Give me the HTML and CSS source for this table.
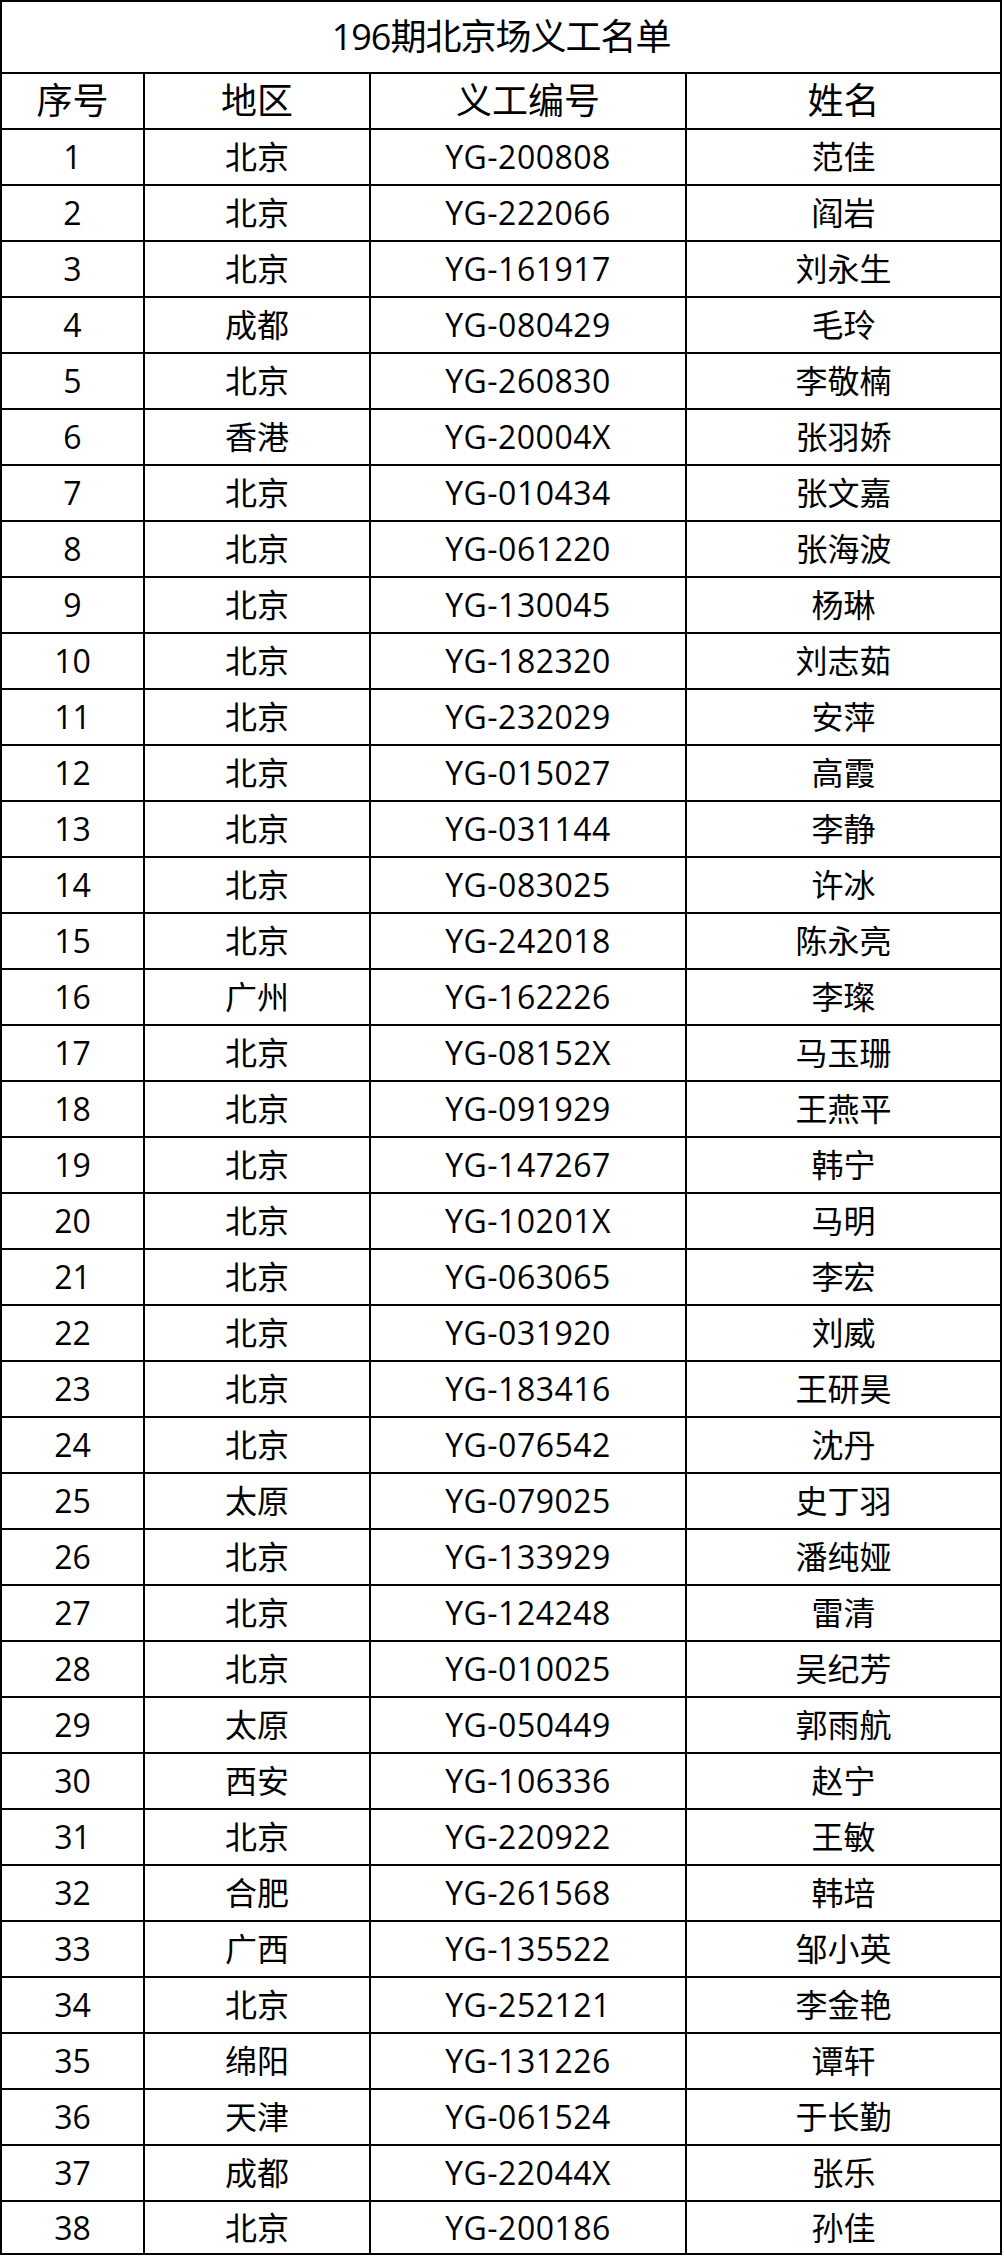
FILE: index.html
```html
<!DOCTYPE html>
<html lang="zh-CN">
<head>
<meta charset="utf-8">
<title>196期北京场义工名单</title>
<link rel="stylesheet" href="styles.css">
</head>
<body>
<table class="roster">
  <colgroup>
    <col class="c-no">
    <col class="c-area">
    <col class="c-id">
    <col class="c-name">
  </colgroup>
  <thead>
    <tr class="title-row"><th colspan="4" class="title">196期北京场义工名单</th></tr>
    <tr class="head-row"><th>序号</th><th>地区</th><th>义工编号</th><th>姓名</th></tr>
  </thead>
  <tbody>
    <tr><td>1</td><td>北京</td><td>YG-200808</td><td>范佳</td></tr>
    <tr><td>2</td><td>北京</td><td>YG-222066</td><td>阎岩</td></tr>
    <tr><td>3</td><td>北京</td><td>YG-161917</td><td>刘永生</td></tr>
    <tr><td>4</td><td>成都</td><td>YG-080429</td><td>毛玲</td></tr>
    <tr><td>5</td><td>北京</td><td>YG-260830</td><td>李敬楠</td></tr>
    <tr><td>6</td><td>香港</td><td>YG-20004X</td><td>张羽娇</td></tr>
    <tr><td>7</td><td>北京</td><td>YG-010434</td><td>张文嘉</td></tr>
    <tr><td>8</td><td>北京</td><td>YG-061220</td><td>张海波</td></tr>
    <tr><td>9</td><td>北京</td><td>YG-130045</td><td>杨琳</td></tr>
    <tr><td>10</td><td>北京</td><td>YG-182320</td><td>刘志茹</td></tr>
    <tr><td>11</td><td>北京</td><td>YG-232029</td><td>安萍</td></tr>
    <tr><td>12</td><td>北京</td><td>YG-015027</td><td>高霞</td></tr>
    <tr><td>13</td><td>北京</td><td>YG-031144</td><td>李静</td></tr>
    <tr><td>14</td><td>北京</td><td>YG-083025</td><td>许冰</td></tr>
    <tr><td>15</td><td>北京</td><td>YG-242018</td><td>陈永亮</td></tr>
    <tr><td>16</td><td>广州</td><td>YG-162226</td><td>李璨</td></tr>
    <tr><td>17</td><td>北京</td><td>YG-08152X</td><td>马玉珊</td></tr>
    <tr><td>18</td><td>北京</td><td>YG-091929</td><td>王燕平</td></tr>
    <tr><td>19</td><td>北京</td><td>YG-147267</td><td>韩宁</td></tr>
    <tr><td>20</td><td>北京</td><td>YG-10201X</td><td>马明</td></tr>
    <tr><td>21</td><td>北京</td><td>YG-063065</td><td>李宏</td></tr>
    <tr><td>22</td><td>北京</td><td>YG-031920</td><td>刘威</td></tr>
    <tr><td>23</td><td>北京</td><td>YG-183416</td><td>王研昊</td></tr>
    <tr><td>24</td><td>北京</td><td>YG-076542</td><td>沈丹</td></tr>
    <tr><td>25</td><td>太原</td><td>YG-079025</td><td>史丁羽</td></tr>
    <tr><td>26</td><td>北京</td><td>YG-133929</td><td>潘纯娅</td></tr>
    <tr><td>27</td><td>北京</td><td>YG-124248</td><td>雷清</td></tr>
    <tr><td>28</td><td>北京</td><td>YG-010025</td><td>吴纪芳</td></tr>
    <tr><td>29</td><td>太原</td><td>YG-050449</td><td>郭雨航</td></tr>
    <tr><td>30</td><td>西安</td><td>YG-106336</td><td>赵宁</td></tr>
    <tr><td>31</td><td>北京</td><td>YG-220922</td><td>王敏</td></tr>
    <tr><td>32</td><td>合肥</td><td>YG-261568</td><td>韩培</td></tr>
    <tr><td>33</td><td>广西</td><td>YG-135522</td><td>邹小英</td></tr>
    <tr><td>34</td><td>北京</td><td>YG-252121</td><td>李金艳</td></tr>
    <tr><td>35</td><td>绵阳</td><td>YG-131226</td><td>谭轩</td></tr>
    <tr><td>36</td><td>天津</td><td>YG-061524</td><td>于长勤</td></tr>
    <tr><td>37</td><td>成都</td><td>YG-22044X</td><td>张乐</td></tr>
    <tr class="last-row"><td>38</td><td>北京</td><td>YG-200186</td><td>孙佳</td></tr>
  </tbody>
</table>
</body>
</html>
```

FILE: styles.css
```css
html, body {
  margin: 0;
  padding: 0;
  background: #fff;
}

body {
  font-family: "Open Sans", "Noto Sans CJK SC", sans-serif;
  color: #000;
}

.roster {
  border-collapse: separate;
  border-spacing: 0;
  border-top: 2px solid #000;
  border-left: 2px solid #000;
  table-layout: fixed;
  width: 1002px;
}

.c-no { width: 143px; }
.c-area { width: 226px; }
.c-id { width: 316px; }
.c-name { width: 315px; }

.roster th,
.roster td {
  border-right: 2px solid #000;
  border-bottom: 2px solid #000;
  padding: 0;
  text-align: center;
  vertical-align: middle;
  font-weight: normal;
  white-space: nowrap;
  box-sizing: content-box;
}

.roster td {
  height: 54px;
  font-size: 32px;
  line-height: 40px;
}

.roster td:nth-child(3) {
  letter-spacing: 0.5px;
}

.roster .title {
  height: 70px;
  font-size: 36px;
  line-height: 44px;
  letter-spacing: -1px;
}

.head-row th {
  height: 54px;
  font-size: 36px;
  line-height: 44px;
}

.last-row td {
  height: 51px;
}
```
